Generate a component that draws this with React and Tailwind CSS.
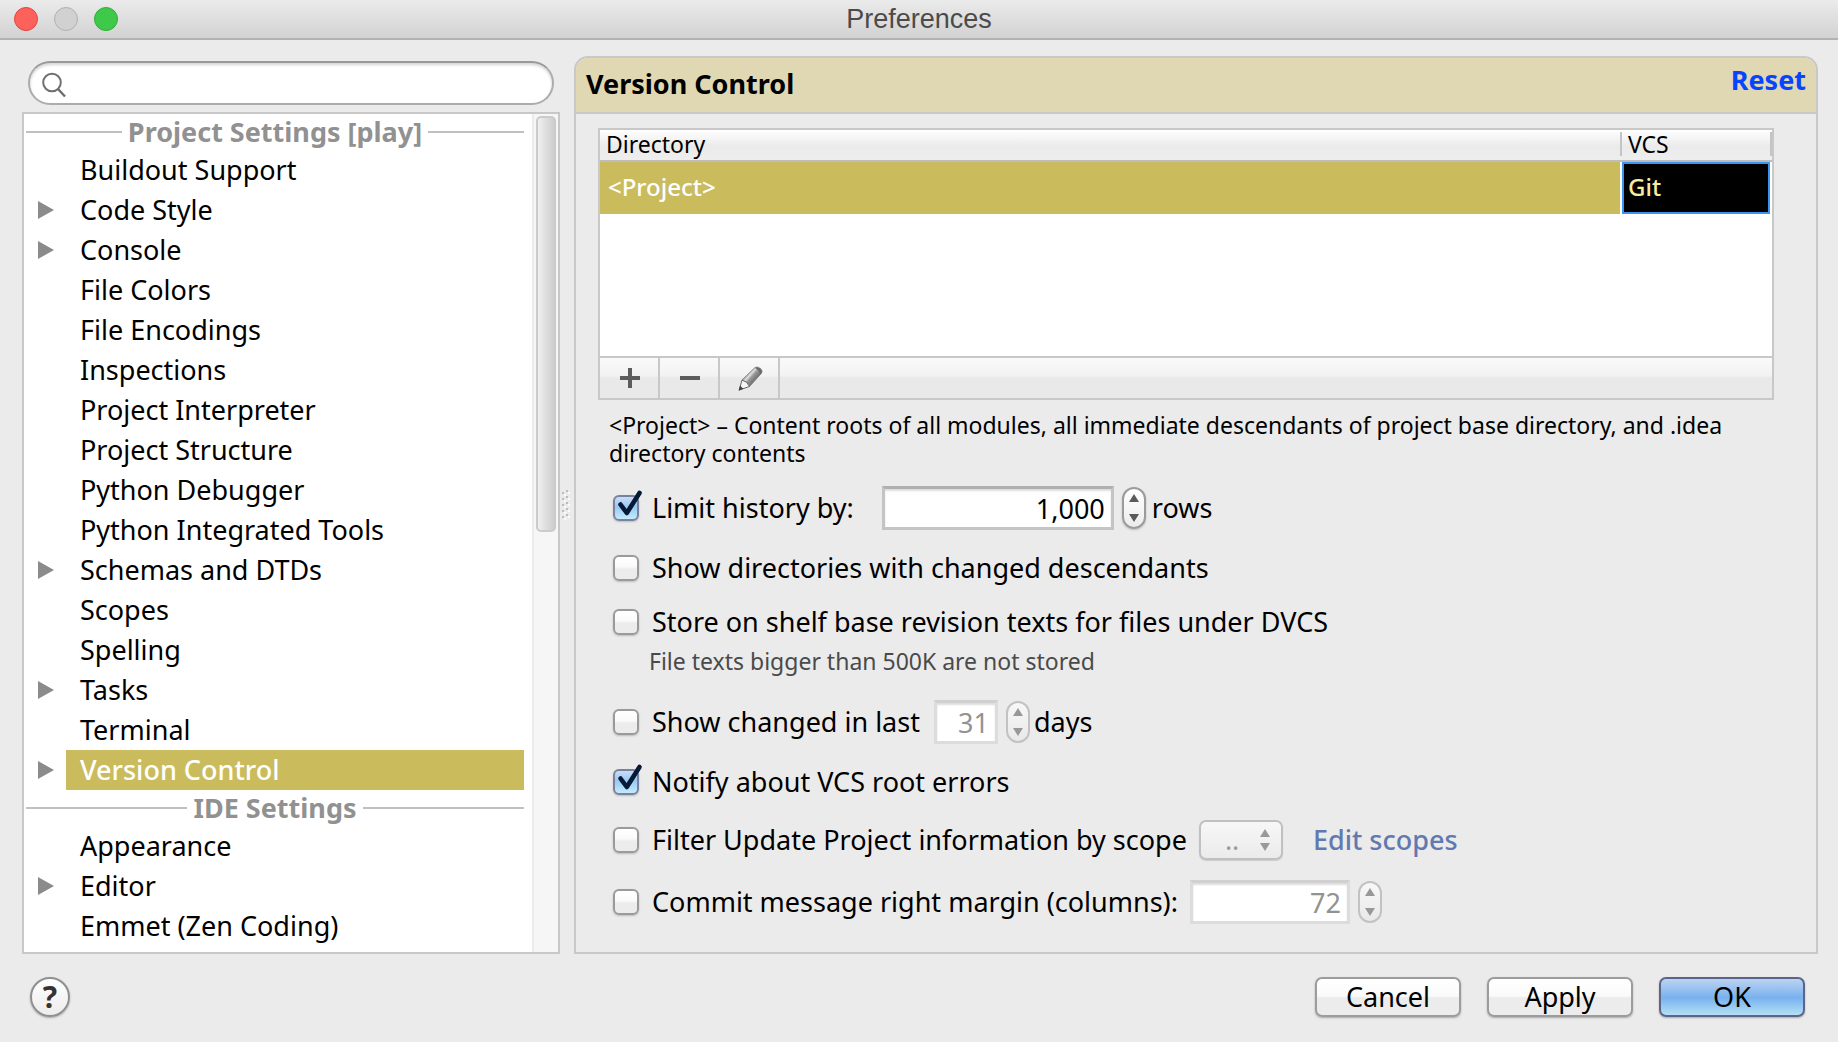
import React from "react";

const projectItems = [
  ["Buildout Support", false],
  ["Code Style", true],
  ["Console", true],
  ["File Colors", false],
  ["File Encodings", false],
  ["Inspections", false],
  ["Project Interpreter", false],
  ["Project Structure", false],
  ["Python Debugger", false],
  ["Python Integrated Tools", false],
  ["Schemas and DTDs", true],
  ["Scopes", false],
  ["Spelling", false],
  ["Tasks", true],
  ["Terminal", false],
  ["Version Control", true],
];

const ideItems = [
  ["Appearance", false],
  ["Editor", true],
  ["Emmet (Zen Coding)", false],
];

function TitleBar() {
  return (
    <header className="grid h-10 grid-cols-[1fr_auto_1fr] items-center border-b-2 border-[#b2b2b2] bg-linear-to-b from-[#ebebeb] to-[#d2d2d2] px-3.5">
      <div className="flex gap-4">
        <button aria-label="Close" className="size-6 rounded-full border border-[#e2453f] bg-[#fc615c]" />
        <button aria-label="Minimize" className="size-6 rounded-full border border-[#b0b0b0] bg-[#d1d1d1]" />
        <button aria-label="Zoom" className="size-6 rounded-full border border-[#2fac38] bg-[#3fc94b]" />
      </div>
      <h1 className="font-['Liberation_Sans',sans-serif] text-[27px] leading-8 text-[#4b4b4b]">Preferences</h1>
    </header>
  );
}

function TreeHeading({ children }) {
  return (
    <h2 className="flex h-9 items-center gap-1.5 pl-0.5 font-bold text-[#919191]">
      <span className="h-0.5 flex-1 bg-[#c0c0c0]" />
      {children}
      <span className="h-0.5 flex-1 bg-[#c0c0c0]" />
    </h2>
  );
}

function Tree({ items }) {
  return (
    <ul>
      {items.map(([name, expandable]) => {
        const selected = name === "Version Control";
        return (
          <li key={name} className="flex h-10 items-center">
            <span className="w-[42px] shrink-0 pl-3.5">
              {expandable && (
                <svg width="16" height="18" viewBox="0 0 16 18">
                  <path d="M0 0L16 9L0 18Z" fill="#8b8b8b" />
                </svg>
              )}
            </span>
            <button
              className={
                selected
                  ? "h-10 flex-1 bg-[#cabb5d] pl-3.5 text-left font-medium text-white"
                  : "h-10 flex-1 pl-3.5 text-left text-black"
              }
            >
              {name}
            </button>
          </li>
        );
      })}
    </ul>
  );
}

function Sidebar() {
  return (
    <aside className="flex w-[538px] shrink-0 flex-col pt-[5px]">
      <div className="mr-1.5 ml-1.5 flex h-11 items-center rounded-full border-2 border-[#acacac] border-t-[#999] bg-white pl-3 shadow-[inset_0_2px_3px_#d4d4d4]">
        <svg className="mt-1" width="25" height="26" viewBox="0 0 25 26" fill="none" stroke="#6f6f6f" strokeWidth="2">
          <circle cx="10" cy="10.5" r="8.8" />
          <path d="M16 17L23 24.5" strokeWidth="2.5" />
        </svg>
        <input aria-label="Search settings" className="ml-2 h-8 flex-1 bg-transparent outline-none" />
      </div>
      <div className="mt-[7px] flex flex-1 border-2 border-[#c8c8c8] bg-white">
        <nav className="flex-1 pr-2 pb-[5px]">
          <TreeHeading>Project Settings [play]</TreeHeading>
          <Tree items={projectItems} />
          <TreeHeading>IDE Settings</TreeHeading>
          <Tree items={ideItems} />
        </nav>
        <div className="w-[26px] border-l-2 border-[#ebebeb] bg-[#f6f6f6] px-0.5 pt-0.5">
          <div className="h-[416px] rounded-[5px] border-2 border-[#cbcbcb] bg-linear-to-r from-[#efefef] to-[#cecece]" />
        </div>
      </div>
    </aside>
  );
}

function Splitter() {
  return (
    <div className="flex w-3.5 shrink-0 pt-[434px] pl-0.5">
      <svg width="8" height="30" viewBox="0 0 8 30" fill="#bdbdbd">
        {[0, 6, 12, 18, 24].map((y) => (
          <g key={y}>
            <rect x="4" y={y} width="2" height="2" />
            <rect x="0" y={y + 2} width="2" height="2" />
            <rect x="2" y={y + 4} width="2" height="2" fill="#fafafa" />
            <rect x="6" y={y + 2} width="2" height="2" fill="#fafafa" />
          </g>
        ))}
      </svg>
    </div>
  );
}

function MappingTable() {
  return (
    <div className="border-2 border-[#c8c8c8] bg-white">
      <div className="h-[226px]">
        <table className="w-full table-fixed border-separate border-spacing-0 text-left">
          <thead>
            <tr className="h-8 bg-linear-to-b from-white from-0% via-[#ebebeb] via-50% to-[#eeeeee]">
              <th className="border-b-2 border-[#bdbdbd] p-0 pb-0.5 pl-1.5 text-[23px] leading-7 font-normal">Directory</th>
              <th className="w-[152px] border-b-2 border-[#bdbdbd] p-0 pb-0.5 text-[23px] leading-6 font-normal">
                <div className="border-x-2 border-[#c4c4c4] pl-1.5">VCS</div>
              </th>
            </tr>
          </thead>
          <tbody>
            <tr className="h-[52px] text-2xl font-medium">
              <td className="p-0 pb-0.5 pl-2 bg-[#cabb5d] text-white">&lt;Project&gt;</td>
              <td className="px-0.5">
                <div className="flex h-[52px] items-center border-2 border-[#3b94ee] bg-black pb-0.5 pl-1 text-[#f7eb9f]">Git</div>
              </td>
            </tr>
          </tbody>
        </table>
      </div>
      <div className="flex h-[42px] border-t-2 border-[#c8c8c8] bg-linear-to-b from-[#fafafa] via-[#f2f2f2] via-45% to-[#e9e9e9] to-50%">
        <button aria-label="Add" className="flex w-[60px] items-center justify-center border-r-2 border-[#c8c8c8] pl-0.5">
          <svg width="20" height="20" viewBox="0 0 20 20"><path d="M0 10H20M10 0V20" stroke="#5c5c5c" strokeWidth="4" /></svg>
        </button>
        <button aria-label="Remove" className="flex w-[60px] items-center justify-center border-r-2 border-[#c8c8c8] pl-0.5">
          <svg width="20" height="20" viewBox="0 0 20 20"><path d="M0 10H20" stroke="#5c5c5c" strokeWidth="4" /></svg>
        </button>
        <button aria-label="Edit" className="flex w-[60px] items-center justify-center border-r-2 border-[#c8c8c8] pl-0.5">
          <svg width="25" height="25" viewBox="0 0 25 25">
            <defs>
              <linearGradient id="barrel" gradientUnits="userSpaceOnUse" x1="8" y1="8" x2="17" y2="16">
                <stop offset="0" stopColor="#7c7c7c" />
                <stop offset="0.3" stopColor="#e0e0e0" />
                <stop offset="0.5" stopColor="#9a9a9a" />
                <stop offset="1" stopColor="#666" />
              </linearGradient>
            </defs>
            <path d="M4 14L16.5 2Q18 0.6 20 1.2Q23.5 2.4 24 5Q24.2 6.4 23 7.8L11.5 20.5Q9.5 15.5 4 14Z" fill="url(#barrel)" stroke="#777" strokeWidth="0.8" />
            <path d="M18.5 1.2Q23.2 2 24 6L22.4 8.4Q21.5 4.4 17 2Z" fill="#6a6a6a" />
            <path d="M4 14Q9.5 15.5 11.5 20.5L1.2 24Z" fill="#f5f5f5" stroke="#666" strokeWidth="1" />
            <path d="M2 19.8L5.4 22.8L0.6 24.8Z" fill="#404040" />
          </svg>
        </button>
      </div>
    </div>
  );
}

function CheckBox({ label, checked = false }) {
  return (
    <label className="flex items-center gap-[13px] whitespace-nowrap">
      <span className="relative size-[26px]">
        <input
          type="checkbox"
          defaultChecked={checked}
          className="peer block size-[26px] appearance-none rounded-[6px] border-2 border-[#9a9a9a] bg-linear-to-b from-white via-[#fafafa] via-45% to-[#ececec] to-55% shadow-[0_1px_2px_#bbb] checked:border-[#7a819c] checked:from-[#c8def6] checked:via-[#98c8f5] checked:to-[#c4ebfc] checked:to-100%"
        />
        <svg
          className="pointer-events-none absolute -top-1.5 left-0 hidden peer-checked:block"
          width="31"
          height="30"
          viewBox="0 0 31 30"
          fill="none"
          stroke="#061a35"
          strokeWidth="4.6"
          strokeLinecap="round"
          strokeLinejoin="round"
        >
          <path d="M7.5 15.5L13.8 24L26.5 4" />
        </svg>
      </span>
      {label}
    </label>
  );
}

function NumberBox({ label, value, width, disabled = false }) {
  return (
    <input
      aria-label={label}
      defaultValue={value}
      disabled={disabled}
      className={
        width +
        " h-11 border-[3px] border-[#c4c4c4] border-t-[#b0b0b0] bg-white pr-1.5 text-right text-black shadow-[inset_0_2px_2px_#ddd] disabled:border-[#dcdcdc] disabled:border-t-[#d0d0d0] disabled:text-[#929292]"
      }
    />
  );
}

function Stepper({ label, disabled = false }) {
  return (
    <span
      className={
        disabled
          ? "flex h-[42px] w-6 flex-col items-center justify-center gap-3 rounded-full border-2 border-[#c2c2c2] bg-linear-to-b from-[#f8f8f8] to-[#e9e9e9] text-[#989898]"
          : "flex h-[42px] w-6 flex-col items-center justify-center gap-3 rounded-full border-2 border-[#9b9b9b] bg-linear-to-b from-white to-[#ececec] text-[#5a5a5a] shadow-[0_1px_2px_#bbb]"
      }
    >
      <button aria-label={"Increase " + label} disabled={disabled}>
        <svg className="block" width="10" height="8" viewBox="0 0 10 8"><path d="M0 8L5 0L10 8Z" fill="currentColor" /></svg>
      </button>
      <button aria-label={"Decrease " + label} disabled={disabled}>
        <svg className="block" width="10" height="8" viewBox="0 0 10 8"><path d="M0 0H10L5 8Z" fill="currentColor" /></svg>
      </button>
    </span>
  );
}

function ScopeSelect() {
  return (
    <span className="relative ml-3">
      <select
        aria-label="Scope"
        disabled
        className="block h-10 w-[84px] appearance-none rounded-[7px] border-2 border-[#c0c0c0] bg-linear-to-b from-[#f7f7f7] to-[#ebebeb] pl-6 text-[#9a9a9a] opacity-100 shadow-[0_1px_1px_#ccc]"
      >
        <option>..</option>
      </select>
      <svg className="pointer-events-none absolute top-[9px] right-[13px]" width="10" height="22" viewBox="0 0 10 22" fill="#999">
        <path d="M0 8L5 0L10 8ZM0 14H10L5 22Z" />
      </svg>
    </span>
  );
}

function VersionControlPanel() {
  return (
    <section className="flex flex-1 flex-col rounded-t-[14px] border-2 border-[#c8c8c8]">
      <div className="flex h-14 justify-between rounded-t-xl border-b-2 border-[#c8c8c8] bg-[#dfd8b3] pr-2.5 pl-2.5 font-bold">
        <h2 className="leading-[52px]">Version Control</h2>
        <a href="#reset" className="leading-[44px] text-[#0645ff]">Reset</a>
      </div>
      <div className="pt-3.5 pr-[42px] pb-[27px] pl-[22px]">
        <MappingTable />
        <div className="pl-[11px]">
          <p className="mt-[11px] text-[23px] leading-7">
            &lt;Project&gt; – Content roots of all modules, all immediate descendants of project base directory, and .idea
            directory contents
          </p>
        </div>
        <div className="pl-[15px]">
          <div className="mt-[19px] flex h-11 items-center">
            <CheckBox label="Limit history by:" checked />
            <span className="w-7" />
            <NumberBox label="History rows" value="1,000" width="w-[232px]" />
            <span className="w-2" />
            <Stepper label="history rows" />
            <span className="ml-1.5">rows</span>
          </div>
          <div className="mt-[18px] flex h-10 items-center">
            <CheckBox label="Show directories with changed descendants" />
          </div>
          <div className="mt-3.5 flex h-10 items-center">
            <CheckBox label="Store on shelf base revision texts for files under DVCS" />
          </div>
          <p className="mt-[5px] pl-9 text-[23px] leading-7 text-[#4a4a4a]">File texts bigger than 500K are not stored</p>
          <div className="mt-[25px] flex h-11 items-center">
            <CheckBox label="Show changed in last" />
            <span className="w-3.5" />
            <NumberBox label="Changed in last days" value="31" width="w-16" disabled />
            <span className="w-2" />
            <Stepper label="days" disabled />
            <span className="ml-1">days</span>
          </div>
          <div className="mt-[18px] flex h-10 items-center">
            <CheckBox label="Notify about VCS root errors" checked />
          </div>
          <div className="mt-[18px] flex h-10 items-center">
            <CheckBox label="Filter Update Project information by scope" />
            <ScopeSelect />
            <a href="#scopes" className="ml-[30px] font-medium text-[#6279b0]">Edit scopes</a>
          </div>
          <div className="mt-5 flex h-11 items-center">
            <CheckBox label="Commit message right margin (columns):" />
            <span className="w-3" />
            <NumberBox label="Right margin columns" value="72" width="w-40" disabled />
            <span className="w-2" />
            <Stepper label="margin" disabled />
          </div>
        </div>
      </div>
    </section>
  );
}

function Footer() {
  const plain =
    "h-10 w-[146px] rounded-[7px] border-2 border-[#9c9c9c] bg-linear-to-b from-white via-[#fafafa] via-48% to-[#ececec] to-52% leading-8 shadow-[0_1px_2px_#aaa]";
  return (
    <footer className="flex items-center justify-between pt-[23px] pr-[33px] pb-[25px] pl-[30px]">
      <button
        aria-label="Help"
        className="flex size-10 items-center justify-center rounded-full border-2 border-[#8f8f8f] bg-linear-to-b from-white to-[#ececec] text-[30px] leading-8 font-bold text-[#333] shadow-[0_1px_2px_#aaa]"
      >
        ?
      </button>
      <div className="flex gap-[26px]">
        <button className={plain}>Cancel</button>
        <button className={plain}>Apply</button>
        <button className="h-10 w-[146px] rounded-[7px] border-2 border-[#5c648c] bg-linear-to-b from-[#bcd3f1] from-0% via-[#78b1ee] via-52% to-[#b4e0f5] leading-8 shadow-[0_1px_2px_#aaa]">
          OK
        </button>
      </div>
    </footer>
  );
}

export default function App() {
  return (
    <div className="flex min-h-screen flex-col bg-[#ebebeb] font-['Noto_Sans','Open_Sans',sans-serif] text-[27px] leading-9 text-black">
      <TitleBar />
      <main className="flex flex-1 pt-4 pr-5 pl-[22px]">
        <Sidebar />
        <Splitter />
        <VersionControlPanel />
      </main>
      <Footer />
    </div>
  );
}
